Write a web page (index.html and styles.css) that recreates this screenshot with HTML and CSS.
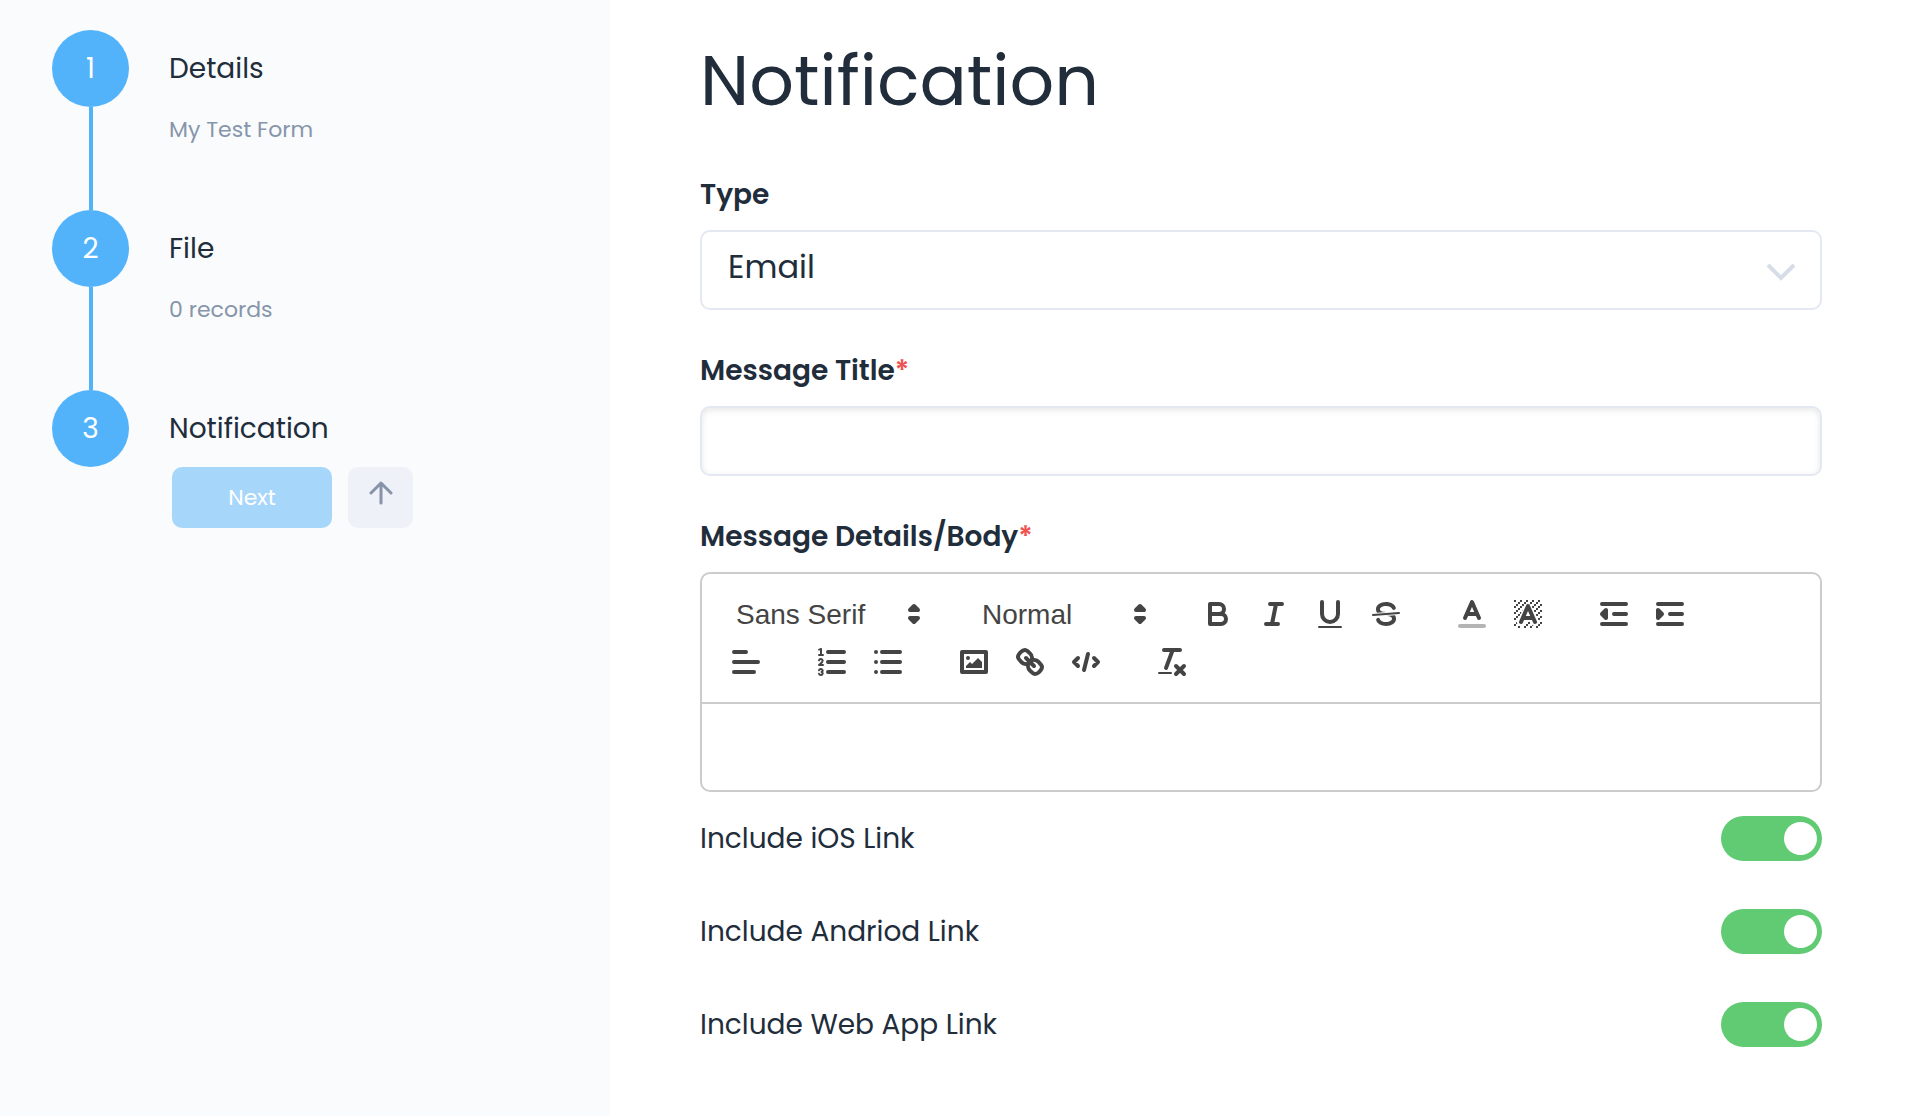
FILE: index.html
```html
<!DOCTYPE html>
<html lang="en">
<head>
    <meta charset="UTF-8">
    <meta name="viewport" content="width=device-width, initial-scale=1.0">
    <title>Notification</title>
    <link rel="stylesheet" href="styles.css">
</head>
<body>
    <div class="layout">
        <aside class="sidebar">
            <ol class="steps">
                <li class="step">
                    <span class="step-number">1</span>
                    <div class="step-content">
                        <div class="step-title">Details</div>
                        <div class="step-info">My Test Form</div>
                    </div>
                </li>
                <li class="step">
                    <span class="step-number">2</span>
                    <div class="step-content">
                        <div class="step-title">File</div>
                        <div class="step-info">0 records</div>
                    </div>
                </li>
                <li class="step">
                    <span class="step-number">3</span>
                    <div class="step-content">
                        <div class="step-title">Notification</div>
                        <div class="step-actions">
                            <button type="button" class="btn-next" disabled>Next</button>
                            <button type="button" class="btn-up" aria-label="Previous step">
                                <svg width="24" height="24" viewBox="0 0 24 24"><path d="M12 22V2M2 12L12 2l10 10"/></svg>
                            </button>
                        </div>
                    </div>
                </li>
            </ol>
        </aside>

        <main class="main">
            <h1>Notification</h1>
            <form>
                <div class="field">
                    <label for="type">Type</label>
                    <div class="select-wrap">
                        <select id="type">
                            <option>Email</option>
                            <option>Push</option>
                        </select>
                        <svg class="chevron" width="30" height="20" viewBox="0 0 30 20"><path d="M2 2l13 13L28 2"/></svg>
                    </div>
                </div>

                <div class="field">
                    <label for="title">Message Title<span class="required">*</span></label>
                    <input type="text" id="title" required>
                </div>

                <div class="field">
                    <label id="bodyLabel">Message Details/Body<span class="required">*</span></label>
                    <div class="editor">
                        <div class="toolbar">
                            <span class="formats">
                                <span class="picker picker-font">
                                    <select aria-label="Font">
                                        <option>Sans Serif</option>
                                        <option>Serif</option>
                                        <option>Monospace</option>
                                    </select>
                                    <svg viewBox="0 0 18 18"><polygon class="solid" points="7 11 9 13 11 11 7 11"/><polygon class="solid" points="7 7 9 5 11 7 7 7"/></svg>
                                </span>
                            </span>
                            <span class="formats">
                                <span class="picker picker-size">
                                    <select aria-label="Size">
                                        <option>Normal</option>
                                        <option>Small</option>
                                        <option>Large</option>
                                    </select>
                                    <svg viewBox="0 0 18 18"><polygon class="solid" points="7 11 9 13 11 11 7 11"/><polygon class="solid" points="7 7 9 5 11 7 7 7"/></svg>
                                </span>
                            </span>
                            <span class="formats">
                                <button type="button" aria-label="Bold">
                                    <svg viewBox="0 0 18 18"><path d="M5,4H9.5A2.5,2.5,0,0,1,12,6.5v0A2.5,2.5,0,0,1,9.5,9H5V4Z"/><path d="M5,9h5.5A2.5,2.5,0,0,1,13,11.5v0A2.5,2.5,0,0,1,10.5,14H5V9Z"/></svg>
                                </button>
                                <button type="button" aria-label="Italic">
                                    <svg viewBox="0 0 18 18"><path d="M7 4H13M5 14H11M8 14L10 4"/></svg>
                                </button>
                                <button type="button" aria-label="Underline">
                                    <svg viewBox="0 0 18 18"><path d="M5,3V9a4.012,4.012,0,0,0,4,4H9a4.012,4.012,0,0,0,4-4V3"/><rect class="fill" height="1" rx="0.5" ry="0.5" width="12" x="3" y="15"/></svg>
                                </button>
                                <button type="button" aria-label="Strikethrough">
                                    <svg viewBox="0 0 18 18"><path class="thin" d="M15.5 8.5L2.5 9.5"/><path class="fill" d="M9.007,8C6.542,7.791,6,7.519,6,6.5,6,5.792,7.283,5,9,5c1.571,0,2.765.679,2.969,1.309a1,1,0,0,0,1.9-.617C13.356,4.106,11.354,3,9,3,6.2,3,4,4.538,4,6.5a3.2,3.2,0,0,0,.5,1.843Z"/><path class="fill" d="M8.984,10C11.457,10.208,12,10.479,12,11.5c0,0.708-1.283,1.5-3,1.5-1.571,0-2.765-.679-2.969-1.309a1,1,0,1,0-1.9.617C4.644,13.894,6.646,15,9,15c2.8,0,5-1.538,5-3.5a3.2,3.2,0,0,0-.5-1.843Z"/></svg>
                                </button>
                            </span>
                            <span class="formats">
                                <button type="button" aria-label="Text color">
                                    <svg viewBox="0 0 18 18"><path class="faded" d="M3 15H15"/><path d="M5.5 11L9 3L12.5 11M11.63 9H6.38"/></svg>
                                </button>
                                <button type="button" aria-label="Background color">
                                    <svg viewBox="0 0 18 18">
                                        <defs>
                                            <pattern id="hatch" width="3" height="3" x="2" y="2" patternUnits="userSpaceOnUse">
                                                <path class="fill" d="M0 0h1v1H0zM2 1h1v1H2zM1 2h1v1H1z"/>
                                            </pattern>
                                        </defs>
                                        <rect class="hatch-area" x="2" y="2" width="14" height="14"/>
                                        <path class="halo" d="M5.5 13L9 6L12.5 13"/>
                                        <path d="M5.5 13L9 5L12.5 13M11.63 11H6.38"/>
                                    </svg>
                                </button>
                            </span>
                            <span class="formats">
                                <button type="button" aria-label="Decrease indent">
                                    <svg viewBox="0 0 18 18"><path d="M3 14H15M3 4H15M9 9H15"/><polygon class="solid" points="5 7 5 11 3 9 5 7"/></svg>
                                </button>
                                <button type="button" aria-label="Increase indent">
                                    <svg viewBox="0 0 18 18"><path d="M3 14H15M3 4H15M9 9H15"/><polygon class="solid" points="3 7 3 11 5 9 3 7"/></svg>
                                </button>
                            </span>
                            <span class="formats">
                                <button type="button" aria-label="Align">
                                    <svg viewBox="0 0 18 18"><path d="M3 9H15M3 14H13M3 4H9"/></svg>
                                </button>
                            </span>
                            <span class="formats">
                                <button type="button" aria-label="Numbered list">
                                    <svg viewBox="0 0 18 18"><path d="M7 4H15M7 9H15M7 14H15"/><path class="thin" d="M2.5 5.5H4.5"/><path class="fill" d="M3.5,6A0.5,0.5,0,0,1,3,5.5V3.085l-0.276.138A0.5,0.5,0,0,1,2.053,3c-0.124-.247-0.023-0.324.224-0.447l1-.5A0.5,0.5,0,0,1,4,2.5v3A0.5,0.5,0,0,1,3.5,6Z"/><path class="thin" d="M4.5,10.5h-2c0-.234,1.85-1.076,1.85-2.234A0.959,0.959,0,0,0,2.5,8.156"/><path class="thin" d="M2.5,14.846a0.959,0.959,0,0,0,1.85-.109A0.7,0.7,0,0,0,3.75,14a0.688,0.688,0,0,0,.6-0.736,0.959,0.959,0,0,0-1.85-.109"/></svg>
                                </button>
                                <button type="button" aria-label="Bullet list">
                                    <svg viewBox="0 0 18 18"><path d="M6 4H15M6 9H15M6 14H15M3 4H3M3 9H3M3 14H3"/></svg>
                                </button>
                            </span>
                            <span class="formats">
                                <button type="button" aria-label="Image">
                                    <svg viewBox="0 0 18 18"><rect height="10" width="12" x="3" y="4"/><circle class="fill" cx="6" cy="7" r="1"/><polyline class="fill" points="5 12 5 11 7 9 8 10 11 7 13 9 13 12 5 12"/></svg>
                                </button>
                                <button type="button" aria-label="Link">
                                    <svg viewBox="0 0 18 18"><path d="M7 7L11 11"/><path d="M8.9,4.577a3.476,3.476,0,0,1,.36,4.679A3.476,3.476,0,0,1,4.577,8.9C3.185,7.5,2.035,6.4,4.217,4.217S7.5,3.185,8.9,4.577Z"/><path d="M13.423,9.1a3.476,3.476,0,0,0-4.679-.36,3.476,3.476,0,0,0,.36,4.679c1.392,1.392,2.5,2.542,4.679.36S14.815,10.5,13.423,9.1Z"/></svg>
                                </button>
                                <button type="button" aria-label="Code">
                                    <svg viewBox="0 0 18 18"><path d="M5 7L3 9L5 11M13 7L15 9L13 11M10 5L8 13"/></svg>
                                </button>
                            </span>
                            <span class="formats">
                                <button type="button" aria-label="Clear formatting">
                                    <svg viewBox="0 0 18 18"><path d="M5 3H13M6 12L9.35 3M11 11L15 15M15 11L11 15"/><rect class="fill" height="1" rx="0.5" ry="0.5" width="7" x="2" y="14"/></svg>
                                </button>
                            </span>
                        </div>
                        <div class="editor-body" contenteditable="true" role="textbox" aria-multiline="true" aria-labelledby="bodyLabel"></div>
                    </div>
                </div>

                <div class="toggle-row">
                    <label for="ios">Include iOS Link</label>
                    <input type="checkbox" class="toggle" id="ios" checked>
                </div>
                <div class="toggle-row">
                    <label for="android">Include Andriod Link</label>
                    <input type="checkbox" class="toggle" id="android" checked>
                </div>
                <div class="toggle-row">
                    <label for="web">Include Web App Link</label>
                    <input type="checkbox" class="toggle" id="web" checked>
                </div>
            </form>
        </main>
    </div>
</body>
</html>
```
FILE: styles.css
```css
* {
    box-sizing: border-box;
}
body {
    margin: 0;
    font-family: Poppins, Inter, sans-serif;
    font-size: 28px;
    color: #212d3b;
    background: #fff;
}
button, input, select {
    font-family: inherit;
    margin: 0;
}
.layout {
    display: flex;
    min-height: 100vh;
}

/* Sidebar */
.sidebar {
    flex: 0 0 610px;
    padding: 30px 52px;
    background: #f9fbfd;
}
.steps {
    list-style: none;
    margin: 0;
    padding: 0;
}
.step {
    display: flex;
    gap: 40px;
    position: relative;
    min-height: 180px;
}
.step:not(:last-child)::before {
    content: "";
    position: absolute;
    top: 77px;
    bottom: 0;
    left: 37px;
    width: 4px;
    background: #52b3fa;
}
.step-number {
    display: flex;
    align-items: center;
    justify-content: center;
    width: 77px;
    height: 77px;
    border-radius: 50%;
    background: #52b3fa;
    color: #fff;
}
.step-title {
    line-height: 77px;
}
.step-info {
    font-size: 22px;
    line-height: 46px;
    color: #8795ab;
}
.step-actions {
    display: flex;
    gap: 16px;
    margin-left: 3px;
}
.step-actions button {
    height: 61px;
    border: 0;
    border-radius: 10px;
}
.btn-next {
    width: 160px;
    font-size: 22px;
    background: #a7d6fb;
    color: #fff;
}
.btn-up {
    width: 65px;
    padding: 0 0 4px;
    background: #eef1f7;
}
.btn-up svg {
    fill: none;
    stroke: #8693a9;
    stroke-width: 3;
    stroke-linecap: round;
    stroke-linejoin: round;
}

/* Form */
.main {
    flex: 1;
    padding: 32px 96px 64px 90px;
}
h1 {
    margin: 0 0 44px;
    font-size: 70px;
    font-weight: 400;
    line-height: 98px;
}
.field {
    margin-bottom: 40px;
}
.field > label {
    display: block;
    margin-bottom: 14px;
    font-weight: 600;
    line-height: 42px;
}
.required {
    color: #f05252;
}
.select-wrap {
    position: relative;
}
.select-wrap select,
input[type="text"] {
    appearance: none;
    display: block;
    width: 100%;
    border: 2px solid #e4e8f2;
    border-radius: 10px;
    background: #fff;
    color: inherit;
    font-size: 32px;
}
.select-wrap select {
    height: 80px;
    padding: 0 80px 8px 26px;
}
.chevron {
    position: absolute;
    top: 33px;
    right: 26px;
    fill: none;
    stroke: #d6dde6;
    stroke-width: 4;
    pointer-events: none;
}
input[type="text"] {
    height: 70px;
    padding: 0 26px;
    box-shadow: inset 0 2px 6px rgba(0, 0, 0, 0.1);
}

/* Editor */
.editor {
    border: 2px solid #ccc;
    border-radius: 10px;
    color: #444;
}
.toolbar {
    display: flex;
    flex-wrap: wrap;
    padding: 16px;
    border-bottom: 2px solid #ccc;
}
.formats {
    display: flex;
    margin-right: 30px;
}
.toolbar button {
    width: 56px;
    height: 48px;
    padding: 6px 10px;
    border: 0;
    background: none;
}
.toolbar svg {
    display: block;
    width: 36px;
    height: 36px;
    fill: none;
    stroke: #444;
    stroke-width: 2;
    stroke-linecap: round;
    stroke-linejoin: round;
}
.toolbar .thin {
    stroke-width: 1;
}
.toolbar .fill {
    fill: #444;
    stroke: none;
}
.toolbar .solid {
    fill: #444;
}
.toolbar .faded {
    opacity: 0.4;
}
.toolbar .hatch-area {
    fill: url(#hatch);
    stroke: none;
}
.toolbar .halo {
    fill: #fff;
    stroke: #fff;
    stroke-width: 4;
}
.picker {
    position: relative;
}
.picker select {
    appearance: none;
    width: 100%;
    height: 48px;
    padding: 0 0 0 18px;
    border: 0;
    background: none;
    color: inherit;
    font-family: "Helvetica Neue", Helvetica, "Liberation Sans", Arial, sans-serif;
    font-size: 28px;
    font-weight: 500;
}
.picker svg {
    position: absolute;
    top: 6px;
    right: 2px;
    pointer-events: none;
}
.picker-font {
    width: 216px;
}
.picker-size {
    width: 196px;
}
.editor-body {
    min-height: 86px;
    padding: 22px 30px;
    outline: none;
}

/* Toggles */
.toggle-row {
    display: flex;
    align-items: center;
    justify-content: space-between;
    margin-bottom: 48px;
}
.field + .toggle-row {
    margin-top: -16px;
}
.toggle {
    appearance: none;
    display: flex;
    align-items: center;
    justify-content: flex-end;
    width: 101px;
    height: 45px;
    margin: 0;
    padding: 0 5px;
    border-radius: 23px;
    background: #60cb73;
}
.toggle::before {
    content: "";
    width: 33px;
    height: 33px;
    border-radius: 50%;
    background: #fff;
}
.toggle:not(:checked) {
    justify-content: flex-start;
    background: #d6dde6;
}
```
